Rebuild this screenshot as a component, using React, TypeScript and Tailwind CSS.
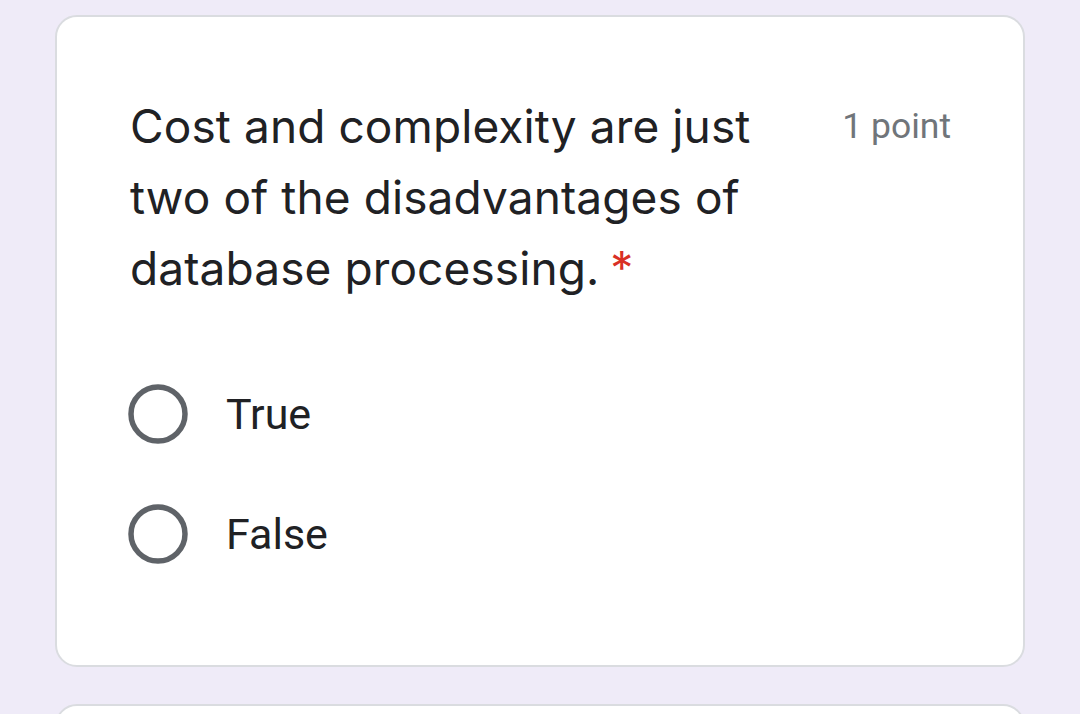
import React from "react";

function Radio() {
  return (
    <svg width="60" height="60" viewBox="0 0 60 60" className="shrink-0">
      <circle cx="30" cy="30" r="27" fill="none" stroke="#5f6368" strokeWidth="5.5" />
    </svg>
  );
}

export default function App() {
  return (
    <div className="w-[1080px] h-[714px] overflow-hidden bg-[#efebf8] pt-[15px] px-[55px]">
      <div className="bg-white border-2 border-[#dadce0] rounded-[22px] h-[652px] pl-[73px] pr-[72px] pt-[74px]">
        <div className="flex justify-between items-start">
          <div
            className="text-[46px] leading-[71px] text-[#202124] whitespace-nowrap tracking-[0.1px]"
            style={{ fontFamily: "Inter, 'Open Sans', sans-serif" }}
          >
            Cost and complexity are just
            <br />
            two of the disadvantages of
            <br />
            database processing.<span className="text-[#d93025] ml-[11px]">*</span>
          </div>
          <div
            className="text-[35.5px] leading-[71px] text-[#70757a]"
            style={{ fontFamily: "Roboto, sans-serif" }}
          >
            1 point
          </div>
        </div>
        <div className="mt-[80px] flex flex-col gap-[60px]">
          {["True", "False"].map((o) => (
            <div key={o} className="flex items-center h-[60px] -ml-[2px]">
              <Radio />
              <span
                className="ml-[38px] text-[43px] text-[#202124]"
                style={{ fontFamily: "Roboto, sans-serif" }}
              >
                {o}
              </span>
            </div>
          ))}
        </div>
      </div>
      <div className="mt-[37px] bg-white border-2 border-[#dadce0] rounded-[22px] h-[100px]" />
    </div>
  );
}
